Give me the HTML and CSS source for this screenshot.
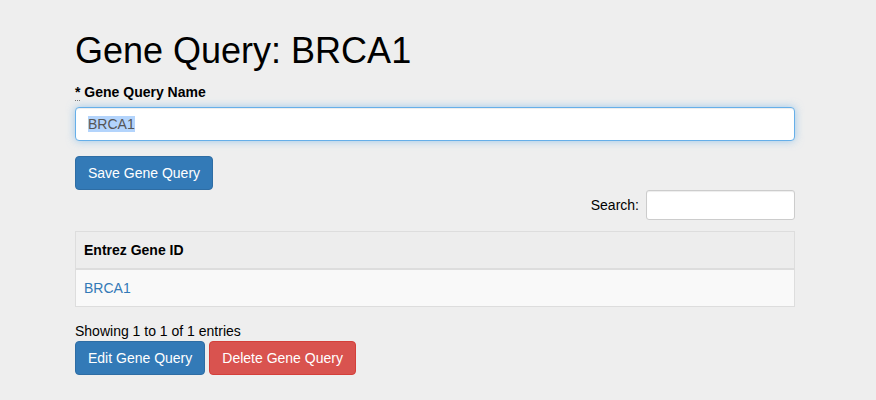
FILE: index.html
```html
<!DOCTYPE html>
<html>
<head>
<meta charset="utf-8">
<link rel="stylesheet" href="styles.css">
</head>
<body>
<div class="page">
  <h1 class="title">Gene Query: BRCA1</h1>
  <div class="form-group">
    <label class="label"><abbr class="req">*</abbr> Gene Query Name</label>
    <div class="field focus"><span class="sel">BRCA1</span></div>
  </div>
  <div class="actions">
    <button class="btn btn-primary">Save Gene Query</button>
  </div>
  <div class="filter">
    <span class="filter-label">Search:</span>
    <div class="field field-sm"></div>
  </div>
  <table class="table">
    <thead>
      <tr><th>Entrez Gene ID</th></tr>
    </thead>
    <tbody>
      <tr><td><a class="link" href="#">BRCA1</a></td></tr>
    </tbody>
  </table>
  <div class="info">Showing 1 to 1 of 1 entries</div>
  <div class="actions row">
    <button class="btn btn-primary">Edit Gene Query</button>
    <button class="btn btn-danger">Delete Gene Query</button>
  </div>
</div>
</body>
</html>
```
FILE: styles.css
```css
html, body {
  margin: 0;
  padding: 0;
  background: #eeeeee;
}
body {
  font-family: "Liberation Sans", Arial, Helvetica, sans-serif;
  font-size: 14px;
  line-height: 20px;
  color: #111;
}
.page {
  width: 720px;
  margin: 0 0 0 75px;
  padding-top: 11px;
}
.title {
  font-size: 36px;
  font-weight: normal;
  line-height: 39.6px;
  margin: 20px 0 11px;
  color: #000;
}
.form-group {
  margin-bottom: 15px;
}
.label {
  display: block;
  font-weight: bold;
  margin: 0 0 5px;
  color: #000;
}
.req {
  text-decoration: none;
  border-bottom: 1px dotted #777;
}
.field {
  box-sizing: border-box;
  height: 34px;
  width: 100%;
  padding: 6px 12px;
  background: #fff;
  border: 1px solid #ccc;
  border-radius: 4px;
  box-shadow: inset 0 1px 1px rgba(0,0,0,.075);
  color: #555;
  line-height: 20px;
}
.focus {
  border-color: #66afe9;
  box-shadow: inset 0 1px 1px rgba(0,0,0,.075), 0 0 8px rgba(102,175,233,.6);
}
.sel {
  background: #b3d4fc;
  color: #555;
}
.actions {
  display: flex;
  gap: 4px;
}
.btn {
  box-sizing: border-box;
  height: 34px;
  padding: 6px 12px;
  font-family: inherit;
  font-size: 14px;
  line-height: 20px;
  color: #fff;
  border: 1px solid transparent;
  border-radius: 4px;
}
.btn-primary {
  background: #337ab7;
  border-color: #2e6da4;
}
.btn-danger {
  background: #d9534f;
  border-color: #d43f3a;
}
.filter {
  display: flex;
  justify-content: flex-end;
  align-items: center;
  gap: 7px;
}
.filter-label {
  color: #000;
}
.field-sm {
  width: 149px;
  height: 30px;
  border-radius: 3px;
}
.table {
  width: 100%;
  border-collapse: collapse;
  margin-top: 11px;
  border: 1px solid #dddddd;
}
.table th {
  text-align: left;
  font-weight: bold;
  color: #000;
  padding: 8px 8px;
  line-height: 20px;
  background: #ededed;
  border-bottom: 2px solid #dddddd;
}
.table td {
  padding: 8px 8px;
  line-height: 20px;
  background: #f9f9f9;
}
.link {
  color: #337ab7;
  text-decoration: none;
}
.info {
  margin-top: 14px;
  color: #000;
}
```
